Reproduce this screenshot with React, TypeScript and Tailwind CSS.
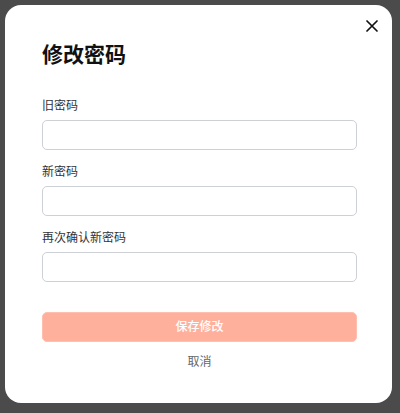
import React from "react";

function Field({ label }: { label: string }) {
  return (
    <div className="flex flex-col">
      <label className="text-[12px] leading-[20px] text-[#333333]">{label}</label>
      <input
        type="password"
        className="mt-[4px] h-[30px] w-full rounded-[5px] border border-[#cdd0d5] bg-white outline-none"
      />
    </div>
  );
}

export default function App() {
  return (
    <div
      className="relative h-[413px] w-[400px] overflow-hidden bg-[#4b4b4b] pt-[5px] pl-[5px]"
      style={{ fontFamily: '"Noto Sans", "Noto Sans CJK SC", sans-serif' }}
    >
      <div className="relative flex h-[398px] w-[387px] flex-col rounded-[16px] bg-white px-[37px] pt-[35px]">
        <button className="absolute right-[8px] top-[9px] flex h-[24px] w-[24px] items-center justify-center text-[#111111]">
          <svg width="12" height="12" viewBox="0 0 12 12" fill="none" stroke="currentColor" strokeWidth="1.7" strokeLinecap="round">
            <path d="M1 1L11 11M11 1L1 11" />
          </svg>
        </button>
        <h2 className="text-[21px] font-bold leading-[28px] text-[#111111]">修改密码</h2>
        <div className="mt-[28px] flex w-[315px] flex-col gap-[12px]">
          <Field label="旧密码" />
          <Field label="新密码" />
          <Field label="再次确认新密码" />
        </div>
        <button className="mt-[30px] h-[30px] w-[315px] rounded-[5px] border border-[#ffbfae] bg-[#ffb09d] text-[12px] font-medium text-white">
          保存修改
        </button>
        <button className="mt-[10px] h-[20px] w-[315px] text-[12px] leading-[20px] text-[#666666]">取消</button>
      </div>
    </div>
  );
}
